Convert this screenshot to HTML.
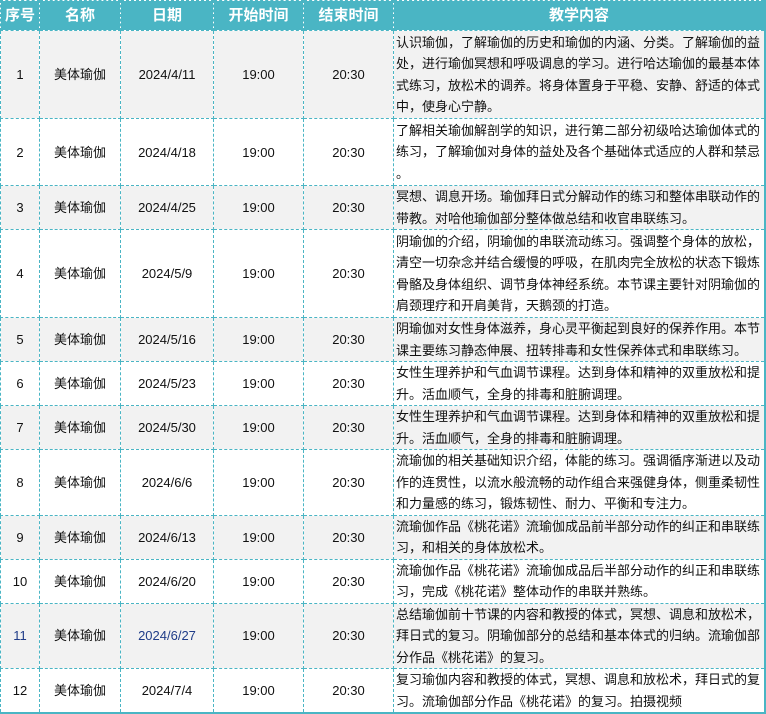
<!DOCTYPE html>
<html><head><meta charset="utf-8"><style>
body{margin:0;background:#fff;}
table{border-collapse:collapse;table-layout:fixed;width:766px;font-family:"Liberation Sans","Noto Sans CJK SC",sans-serif;font-size:13px;color:#111;}
td,th{border:1px dashed #4ab5c4;padding:0;text-align:center;line-height:21px;overflow:hidden;white-space:nowrap;}
th{background:#4ab5c4;color:#fff;font-weight:bold;font-size:15px;height:29px;}
td.c{text-align:left;padding-left:2px;line-height:21.5px;}
tr.g td{background:#f2f2f2;}
table{border-right:2px solid #4ab5c4;border-bottom:2px solid #4ab5c4;}
</style></head><body>
<table>
<colgroup><col style="width:39px"><col style="width:81px"><col style="width:93px"><col style="width:90px"><col style="width:90px"><col></colgroup>
<tr style="height:30px"><th>序号</th><th>名称</th><th>日期</th><th>开始时间</th><th>结束时间</th><th>教学内容</th></tr>
<tr class="g" style="height:88px"><td>1</td><td>美体瑜伽</td><td>2024/4/11</td><td>19:00</td><td>20:30</td><td class="c">认识瑜伽，了解瑜伽的历史和瑜伽的内涵、分类。了解瑜伽的益<br>处，进行瑜伽冥想和呼吸调息的学习。进行哈达瑜伽的最基本体<br>式练习，放松术的调养。将身体置身于平稳、安静、舒适的体式<br>中，使身心宁静。</td></tr>
<tr style="height:67px"><td>2</td><td>美体瑜伽</td><td>2024/4/18</td><td>19:00</td><td>20:30</td><td class="c">了解相关瑜伽解剖学的知识，进行第二部分初级哈达瑜伽体式的<br>练习，了解瑜伽对身体的益处及各个基础体式适应的人群和禁忌<br>。</td></tr>
<tr class="g" style="height:44px"><td>3</td><td>美体瑜伽</td><td>2024/4/25</td><td>19:00</td><td>20:30</td><td class="c">冥想、调息开场。瑜伽拜日式分解动作的练习和整体串联动作的<br>带教。对哈他瑜伽部分整体做总结和收官串联练习。</td></tr>
<tr style="height:88px"><td>4</td><td>美体瑜伽</td><td>2024/5/9</td><td>19:00</td><td>20:30</td><td class="c">阴瑜伽的介绍，阴瑜伽的串联流动练习。强调整个身体的放松，<br>清空一切杂念并结合缓慢的呼吸，在肌肉完全放松的状态下锻炼<br>骨骼及身体组织、调节身体神经系统。本节课主要针对阴瑜伽的<br>肩颈理疗和开肩美背，天鹅颈的打造。</td></tr>
<tr class="g" style="height:44px"><td>5</td><td>美体瑜伽</td><td>2024/5/16</td><td>19:00</td><td>20:30</td><td class="c">阴瑜伽对女性身体滋养，身心灵平衡起到良好的保养作用。本节<br>课主要练习静态伸展、扭转排毒和女性保养体式和串联练习。</td></tr>
<tr style="height:44px"><td>6</td><td>美体瑜伽</td><td>2024/5/23</td><td>19:00</td><td>20:30</td><td class="c">女性生理养护和气血调节课程。达到身体和精神的双重放松和提<br>升。活血顺气，全身的排毒和脏腑调理。</td></tr>
<tr class="g" style="height:44px"><td>7</td><td>美体瑜伽</td><td>2024/5/30</td><td>19:00</td><td>20:30</td><td class="c">女性生理养护和气血调节课程。达到身体和精神的双重放松和提<br>升。活血顺气，全身的排毒和脏腑调理。</td></tr>
<tr style="height:65px"><td>8</td><td>美体瑜伽</td><td>2024/6/6</td><td>19:00</td><td>20:30</td><td class="c">流瑜伽的相关基础知识介绍，体能的练习。强调循序渐进以及动<br>作的连贯性，以流水般流畅的动作组合来强健身体，侧重柔韧性<br>和力量感的练习，锻炼韧性、耐力、平衡和专注力。</td></tr>
<tr class="g" style="height:44px"><td>9</td><td>美体瑜伽</td><td>2024/6/13</td><td>19:00</td><td>20:30</td><td class="c">流瑜伽作品《桃花诺》流瑜伽成品前半部分动作的纠正和串联练<br>习，和相关的身体放松术。</td></tr>
<tr style="height:44px"><td>10</td><td>美体瑜伽</td><td>2024/6/20</td><td>19:00</td><td>20:30</td><td class="c">流瑜伽作品《桃花诺》流瑜伽成品后半部分动作的纠正和串联练<br>习，完成《桃花诺》整体动作的串联并熟练。</td></tr>
<tr class="g" style="height:65px"><td style="color:#1f3c88">11</td><td>美体瑜伽</td><td style="color:#1f3c88">2024/6/27</td><td>19:00</td><td>20:30</td><td class="c">总结瑜伽前十节课的内容和教授的体式，冥想、调息和放松术，<br>拜日式的复习。阴瑜伽部分的总结和基本体式的归纳。流瑜伽部<br>分作品《桃花诺》的复习。</td></tr>
<tr style="height:44px"><td>12</td><td>美体瑜伽</td><td>2024/7/4</td><td>19:00</td><td>20:30</td><td class="c">复习瑜伽内容和教授的体式，冥想、调息和放松术，拜日式的复<br>习。流瑜伽部分作品《桃花诺》的复习。拍摄视频</td></tr>
</table>
</body></html>
